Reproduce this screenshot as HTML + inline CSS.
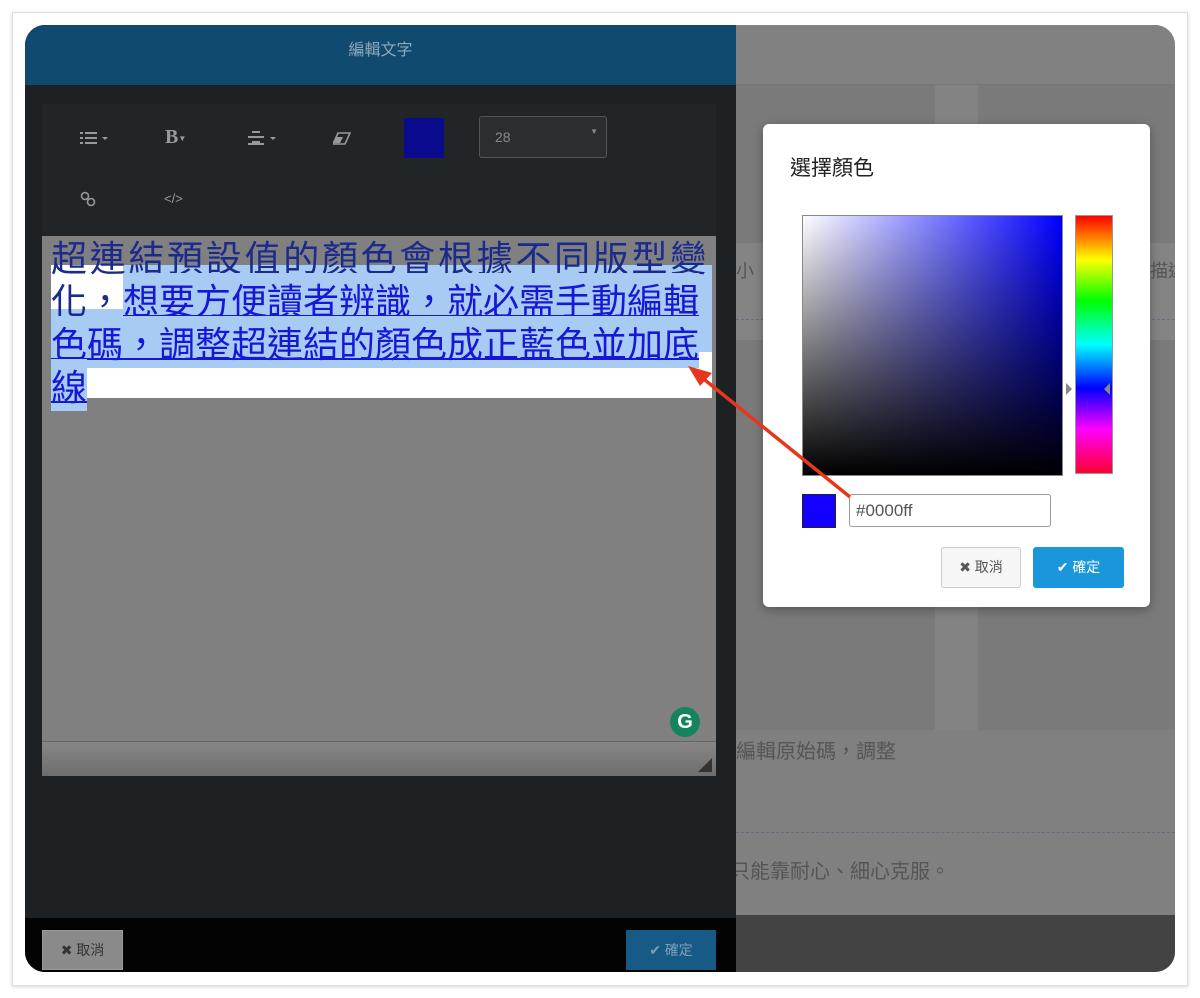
<!DOCTYPE html>
<html><head><meta charset="utf-8"><style>
*{margin:0;padding:0;box-sizing:border-box}
body{width:1200px;height:998px;background:#fff;position:relative;overflow:hidden;font-family:"Liberation Sans","Noto Sans CJK TC",sans-serif}
.a{position:absolute}
.ln{position:absolute;left:26px;font-size:36px;line-height:43px;height:43px;font-family:'Noto Sans CJK TC',sans-serif;white-space:nowrap}
.sel{background:#a8cbf3;color:#1717d6;text-decoration:underline;text-decoration-thickness:2px}
</style></head><body>
<div class="a" style="left:12px;top:12px;width:1176px;height:974px;border:1px solid #ddd;box-shadow:0 1px 4px rgba(0,0,0,.15)"></div>
<div class="a" style="left:25px;top:25px;width:1150px;height:947px;border-radius:20px;overflow:hidden;background:#7f7f7f">
  <div class="a" style="left:711px;top:0;width:439px;height:60px;background:#818181;border-bottom:1px solid #777"></div>
  <div class="a" style="left:711px;top:60px;width:199px;height:645px;background:#7a7a7a"></div>
  <div class="a" style="left:910px;top:60px;width:43px;height:645px;background:#838383"></div>
  <div class="a" style="left:953px;top:60px;width:197px;height:645px;background:#7a7a7a"></div>
  <div class="a" style="left:711px;top:218px;width:439px;height:97px;background:#848484"></div>
  <div class="a" style="left:711px;top:294px;width:439px;border-top:1px dashed #5f6f80"></div>
  <div class="a" style="left:711px;top:232px;font-size:18px;color:#555">小</div>
  <div class="a" style="left:1125px;top:232px;font-size:18px;color:#555;white-space:nowrap">描述</div>
  <div class="a" style="left:711px;top:705px;width:439px;height:185px;background:#808080"></div>
  <div class="a" style="left:711px;top:710px;font-size:20px;color:#555">編輯原始碼，調整</div>
  <div class="a" style="left:711px;top:807px;width:439px;border-top:1px dashed #5f6f80"></div>
  <div class="a" style="left:705px;top:830px;font-size:20px;color:#555">只能靠耐心、細心克服。</div>
  <div class="a" style="left:711px;top:890px;width:439px;height:57px;background:#434343"></div>
  <div class="a" style="left:0;top:0;width:711px;height:947px;background:#1e2124">
    <div class="a" style="left:0;top:0;width:711px;height:60px;background:#114a6f;color:#8fa8bb;font-size:16px;text-align:center;line-height:52px">編輯文字</div>
    <div class="a" style="left:17px;top:79px;width:674px;height:132px;background:#222528"></div>
    <div class="a" style="left:55px;top:106px">
      <svg width="34" height="14" viewBox="0 0 34 14"><g fill="#999"><rect x="0" y="1" width="3" height="2"/><rect x="0" y="6" width="3" height="2"/><rect x="0" y="11" width="3" height="2"/><rect x="5" y="1" width="12" height="2"/><rect x="5" y="6" width="12" height="2"/><rect x="5" y="11" width="12" height="2"/><path d="M22 6h6l-3 3z"/></g></svg>
    </div>
    <div class="a" style="left:140px;top:101px;color:#999;font-size:20px;font-family:'Liberation Serif',serif;font-weight:bold">B<span style="font-size:8px;vertical-align:middle">&#9660;</span></div>
    <div class="a" style="left:223px;top:106px"><svg width="34" height="14"><g fill="#999"><rect x="4" y="0" width="8" height="2"/><rect x="0" y="5" width="16" height="2"/><rect x="4" y="10" width="8" height="2"/><rect x="0" y="12" width="16" height="2"/><path d="M22 6h6l-3 3z"/></g></svg></div>
    <div class="a" style="left:308px;top:106px"><svg width="18" height="14"><path d="M5 2h12l-5 11H0z" fill="none" stroke="#999" stroke-width="1.6"/><path d="M1 12l3-6h6l-3 6z" fill="#999"/></svg></div>
    <div class="a" style="left:379px;top:93px;width:40px;height:40px;background:#0a0a8f"></div>
    <div class="a" style="left:454px;top:91px;width:128px;height:42px;background:#2b2e31;border:1px solid #555;border-radius:3px;color:#888;font-size:14px;padding:12px 15px">28<span class="a" style="right:8px;top:10px;font-size:8px">&#9660;</span></div>
    <div class="a" style="left:55px;top:166px"><svg width="16" height="16"><circle cx="5" cy="5" r="3.5" fill="none" stroke="#999" stroke-width="1.6"/><circle cx="11" cy="11" r="3.5" fill="none" stroke="#999" stroke-width="1.6"/></svg></div>
    <div class="a" style="left:139px;top:166px;color:#999;font-size:13px">&lt;/&gt;</div>
    <div class="a" style="left:17px;top:211px;width:674px;height:540px;background:#808080"></div>
    <div class="a" style="left:26px;top:240px;width:661px;height:133px;background:#fff"></div>
    <div class="a" style="left:98px;top:240px;width:589px;height:44px;background:#a8cbf3"></div>
    <div class="a" style="left:26px;top:284px;width:661px;height:43px;background:#a8cbf3"></div>
    <div class="ln" style="top:210px;color:#1c2a8c;letter-spacing:2.7px">超連結預設值的顏色會根據不同版型變</div>
    <div class="ln" style="top:253px;color:#1c2a8c">化，<span class="sel">想要方便讀者辨識，就必需手動編輯</span></div>
    <div class="ln" style="top:296px"><span class="sel">色碼，調整超連結的顏色成正藍色並加底</span></div>
    <div class="ln" style="top:339px"><span class="sel">線</span></div>
    <div class="a" style="left:17px;top:716px;width:674px;height:35px;border-top:1px solid #666;background:linear-gradient(#868686,#6e6e6e)"></div>
    <div class="a" style="left:673px;top:733px;width:0;height:0;border-left:14px solid transparent;border-bottom:14px solid #333"></div>
    <div class="a" style="left:645px;top:682px;width:30px;height:30px;border-radius:50%;background:#15845e;color:#fff;font-size:20px;text-align:center;line-height:30px;font-weight:bold">G</div>
    <div class="a" style="left:0;top:893px;width:711px;height:54px;background:#030303"></div>
    <div class="a" style="left:17px;top:905px;width:81px;height:40px;background:#8a8a8a;border:1px solid #999;color:#333;font-size:14px;line-height:38px;text-align:center">✖ 取消</div>
    <div class="a" style="left:601px;top:905px;width:90px;height:40px;background:#175a86;color:#7f9fb8;font-size:14px;line-height:40px;text-align:center">✔ 確定</div>
  </div>
</div>
<div class="a" style="left:763px;top:124px;width:387px;height:483px;background:#fff;border-radius:6px;box-shadow:0 3px 10px rgba(0,0,0,.3)">
  <div class="a" style="left:27px;top:28px;font-size:21px;color:#222">選擇顏色</div>
  <div class="a" style="left:39px;top:91px;width:261px;height:261px;background:linear-gradient(to top,#000,rgba(0,0,0,0)),linear-gradient(to right,#fff,#0000ff);border:1px solid #888"></div>
  <div class="a" style="left:312px;top:91px;width:38px;height:259px;border:1px solid #999;background:linear-gradient(#f00,#ff0 17%,#0f0 33%,#0ff 50%,#00f 67%,#f0f 83%,#f03)"></div>
  <div class="a" style="left:303px;top:259px;width:0;height:0;border-top:6px solid transparent;border-bottom:6px solid transparent;border-left:6px solid #888"></div>
  <div class="a" style="left:341px;top:259px;width:0;height:0;border-top:6px solid transparent;border-bottom:6px solid transparent;border-right:6px solid #888"></div>
  <div class="a" style="left:39px;top:370px;width:34px;height:34px;background:#1400ff;border:1px solid #223"></div>
  <div class="a" style="left:86px;top:370px;width:202px;height:33px;border:1px solid #999;border-radius:3px;font-size:17px;color:#555;padding:6px 6px">#0000ff</div>
  <div class="a" style="left:178px;top:423px;width:80px;height:41px;border:1px solid #ccc;border-radius:3px;background:#f6f6f6;color:#555;font-size:14px;line-height:39px;text-align:center">✖ 取消</div>
  <div class="a" style="left:270px;top:423px;width:91px;height:41px;border-radius:3px;background:#1a96dc;color:#fff;font-size:14px;line-height:41px;text-align:center">✔ 確定</div>
</div>
<svg class="a" style="left:0;top:0" width="1200" height="998"><line x1="850" y1="497" x2="700" y2="376" stroke="#e8361b" stroke-width="3.5"/><path d="M688 366 L712 373 L700 386 Z" fill="#e8361b"/></svg>
</body></html>
